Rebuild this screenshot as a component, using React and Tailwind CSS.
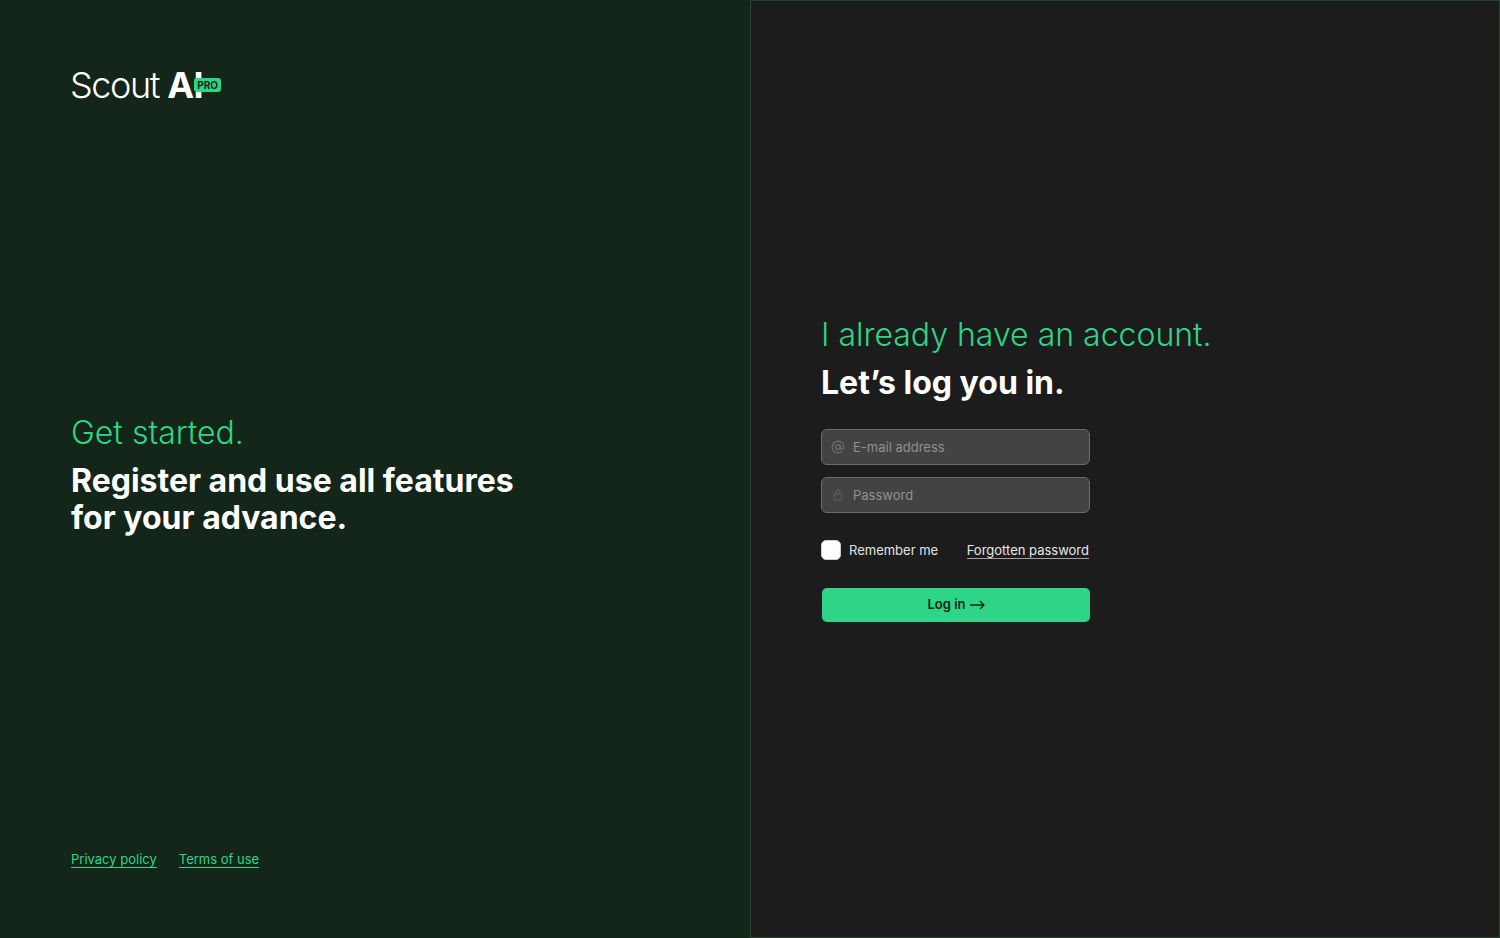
import React from "react";

const inter = { fontFamily: "Inter, sans-serif" };

function AtIcon() {
  return (
    <svg width="14" height="14" viewBox="0 0 24 24" fill="none" stroke="#6f7478" strokeWidth="1.8" strokeLinecap="round" strokeLinejoin="round">
      <circle cx="12" cy="12" r="4" />
      <path d="M16 8v5a3 3 0 0 0 6 0v-1a10 10 0 1 0-4 8" />
    </svg>
  );
}

function LockIcon() {
  return (
    <svg width="10" height="12" viewBox="0 0 10 12" fill="none" stroke="#5f6468" strokeWidth="1">
      <rect x="1" y="5" width="8" height="6" rx="1" />
      <path d="M3 5V3a2 2 0 0 1 4 0v2" />
    </svg>
  );
}

function Field({ icon, placeholder }) {
  return (
    <div className="flex h-9 w-[269px] items-center rounded-md border border-[#6b6b6b] bg-[#434343]">
      <span className="flex w-[31px] shrink-0 items-center justify-center">{icon}</span>
      <span className="text-[13px] leading-none text-[#909090]">{placeholder}</span>
    </div>
  );
}

export default function App() {
  return (
    <div className="flex h-[938px] w-[1500px] overflow-hidden [font-optical-sizing:none]" style={inter}>
      <div className="flex w-[750px] shrink-0 flex-col bg-[#132619] pl-[71px]">
        <div className="mt-[65px] flex h-10 items-center">
          <span className="-ml-[1px] text-[36px] font-light leading-10 tracking-[-1.4px] text-white">Scout</span>
          <span className="relative ml-[8px] text-[36px] font-bold leading-10 tracking-[-0.5px] text-white">
            AI
            <span className="absolute left-[27px] top-[13px] rounded-[3px] bg-[#2ed586] px-[3px] text-[10px] font-bold leading-[14px] tracking-[0px] text-[#132619]">PRO</span>
          </span>
        </div>
        <div className="mt-[308px]">
          <div className="text-[32px] font-light leading-10 text-[#2ed586]">Get started.</div>
          <div className="mt-[9px] text-[32px] font-bold leading-[37px] text-white">
            Register and use all features
            <br />
            for your advance.
          </div>
        </div>
        <div className="mt-[315px] flex gap-[22px] text-[13px] leading-4 text-[#2ed586]">
          <a className="border-b border-[#2ed586]">Privacy policy</a>
          <a className="border-b border-[#2ed586]">Terms of use</a>
        </div>
      </div>
      <div className="flex flex-1 flex-col border border-[#24452d] bg-[#1c1c1c] pl-[70px] pt-[314px]">
        <div className="text-[32px] font-light leading-10 text-[#2ed586]">I already have an account.</div>
        <div className="mt-2 text-[32px] font-bold leading-10 text-white">Let’s log you in.</div>
        <div className="mt-[26px] flex flex-col gap-3">
          <Field icon={<AtIcon />} placeholder="E-mail address" />
          <Field icon={<LockIcon />} placeholder="Password" />
        </div>
        <div className="mt-[27px] flex w-[268px] items-center justify-between">
          <label className="flex items-center gap-2">
            <span className="h-5 w-5 rounded-[5px] border border-[#c9ced6] bg-white" />
            <span className="text-[13px] leading-5 text-[#e2e2e2]">Remember me</span>
          </label>
          <a className="border-b border-[#a0a0a0] text-[13px] leading-4 text-[#e8e8e8]">Forgotten password</a>
        </div>
        <button className="ml-[1px] mt-[28px] flex h-[34px] w-[268px] items-center justify-center gap-1 rounded-[5px] bg-[#2ed586] text-[13px] font-semibold text-[#132619]">
          Log in
          <svg width="15" height="10" viewBox="0 0 15 10" fill="none" stroke="#132619" strokeWidth="1.3">
            <path d="M0 5h14M10 1l4 4-4 4" />
          </svg>
        </button>
      </div>
    </div>
  );
}
